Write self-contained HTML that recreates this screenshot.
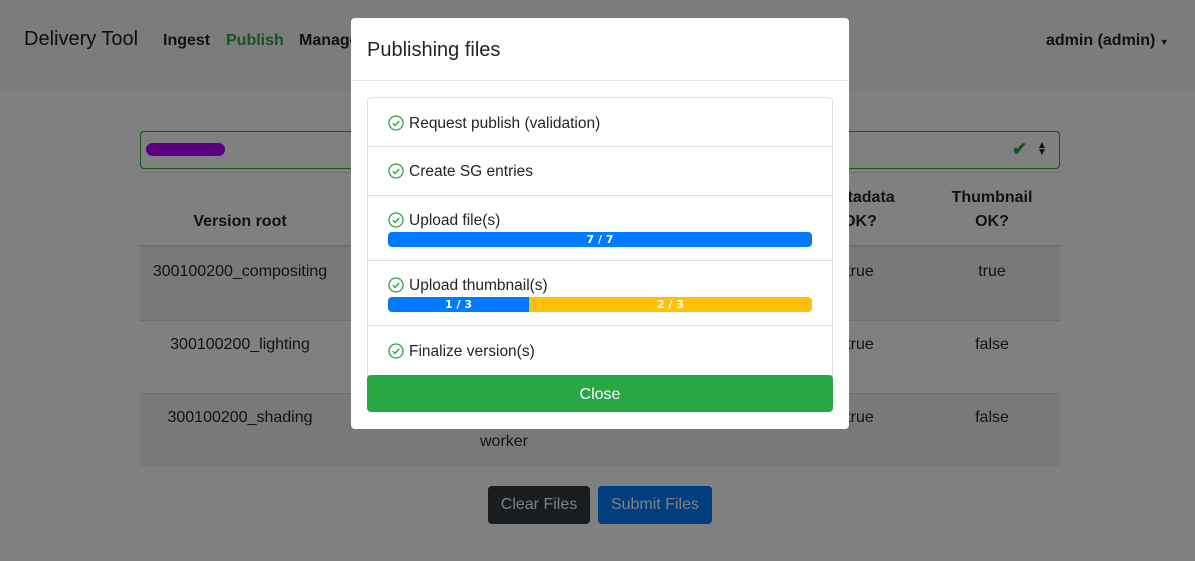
<!DOCTYPE html>
<html><head><meta charset="utf-8"><style>
*{box-sizing:border-box;margin:0;padding:0}
body{width:1195px;height:561px;overflow:hidden;background:#808080;font-family:"Liberation Sans",sans-serif;position:relative;color:#111215}
.a{position:absolute}
.nav{left:0;top:0;width:1195px;height:90px;background:#7c7c7d}
.c{text-align:center;font-size:16px}
.modal{left:351px;top:18px;width:498px;height:411px;background:#fff;border-radius:4px;font-family:"Liberation Sans",sans-serif}
.item{position:absolute;left:16px;width:466px;border:1px solid #dfdfdf;border-top:none;font-size:15.5px;color:#212529}
.chk{display:inline-block;vertical-align:-3px;margin-right:5px}
.bar{position:absolute;left:20px;width:424px;height:15px;border-radius:4px;overflow:hidden;display:flex;font-size:11px;font-weight:bold;color:#fff;line-height:15px;text-align:center;font-family:"DejaVu Sans",sans-serif}
</style></head><body>
<div class="a nav"></div>
<div class="a" style="left:24px;top:28px;font-size:20px;color:#0f0f0f">Delivery Tool</div>
<div class="a" style="left:163px;top:32px;font-size:16px;font-weight:bold;color:#111">Ingest</div>
<div class="a" style="left:226px;top:32px;font-size:16px;font-weight:bold;color:#145322">Publish</div>
<div class="a" style="left:299px;top:32px;font-size:16px;font-weight:bold;color:#111">Manage</div>
<div class="a" style="left:1046px;top:32px;font-size:16px;font-weight:bold;color:#111">admin (admin) <span style="font-size:9px">▼</span></div>

<div class="a" style="left:140px;top:131px;width:920px;height:38px;border:1px solid #145322;border-radius:4px"></div>
<div class="a" style="left:146px;top:143px;width:79px;height:13px;border-radius:7px;background:#5a007f"></div>
<div class="a" style="left:1012px;top:139px;color:#145322;font-size:18px;font-weight:bold">✔</div>
<div class="a" style="left:1037px;top:142px;font-size:10px;line-height:7px;color:#111">▲<br>▼</div>
<div class="a" style="left:140px;top:172px;width:920px;height:1px;background:#6f6f6f"></div>

<div class="a" style="left:140px;top:245px;width:920px;height:2px;background:#6c6e70"></div>
<div class="a" style="left:140px;top:247px;width:920px;height:73px;background:#797979"></div>
<div class="a" style="left:140px;top:320px;width:920px;height:1px;background:#6f6f6f"></div>
<div class="a" style="left:140px;top:393px;width:920px;height:73px;background:#797979;border-top:1px solid #6f6f6f"></div>
<div class="a c" style="left:140px;top:213px;width:200px;font-weight:bold">Version root</div>
<div class="a c" style="left:800px;top:186px;width:120px;font-weight:bold;line-height:24px">Metadata<br>OK?</div>
<div class="a c" style="left:932px;top:186px;width:120px;font-weight:bold;line-height:24px">Thumbnail<br>OK?</div>
<div class="a c" style="left:140px;top:263px;width:200px">300100200_compositing</div>
<div class="a c" style="left:140px;top:336px;width:200px">300100200_lighting</div>
<div class="a c" style="left:140px;top:409px;width:200px">300100200_shading</div>
<div class="a c" style="left:800px;top:263px;width:120px">true</div>
<div class="a c" style="left:800px;top:336px;width:120px">true</div>
<div class="a c" style="left:800px;top:409px;width:120px">true</div>
<div class="a c" style="left:932px;top:263px;width:120px">true</div>
<div class="a c" style="left:932px;top:336px;width:120px">false</div>
<div class="a c" style="left:932px;top:409px;width:120px">false</div>
<div class="a c" style="left:444px;top:433px;width:120px">worker</div>

<div class="a" style="left:488px;top:486px;width:102px;height:38px;background:#1a1d20;border-radius:4px;color:#808080;font-size:16px;text-align:center;line-height:38px">Clear Files</div>
<div class="a" style="left:598px;top:486px;width:114px;height:38px;background:#003e80;border-radius:4px;color:#808080;font-size:16px;text-align:center;line-height:38px">Submit Files</div>

<div class="a modal">
 <div style="position:absolute;left:16px;top:21px;font-size:20px;color:#212529">Publishing files</div>
 <div style="position:absolute;left:0;top:62px;width:498px;height:1px;background:#e5e5e5"></div>
 <div class="item" style="top:79px;height:50px;border-top:1px solid #dfdfdf;border-radius:4px 4px 0 0"><div style="position:absolute;left:20px;top:17px">§1Request publish (validation)</div></div>
 <div class="item" style="top:129px;height:49px"><div style="position:absolute;left:20px;top:16px">§1Create SG entries</div></div>
 <div class="item" style="top:178px;height:65px"><div style="position:absolute;left:20px;top:16px">§1Upload file(s)</div><div class="bar" style="top:36px"><div style="flex:1;background:#007bff">7 / 7</div></div></div>
 <div class="item" style="top:243px;height:65px"><div style="position:absolute;left:20px;top:16px">§1Upload thumbnail(s)</div><div class="bar" style="top:36px"><div style="width:141px;background:#007bff">1 / 3</div><div style="flex:1;background:#ffc107">2 / 3</div></div></div>
 <div class="item" style="top:308px;height:50px"><div style="position:absolute;left:20px;top:17px">§1Finalize version(s)</div></div>
 <div style="position:absolute;left:16px;top:357px;width:466px;height:37px;background:#28a745;border-radius:4px;color:#fff;font-size:16px;text-align:center;line-height:40px">Close</div>
</div>
<script>
var s='<svg class="chk" width="16" height="16" viewBox="0 0 16 16"><circle cx="8" cy="8" r="7" fill="none" stroke="#28a745" stroke-width="1.3"/><path d="M4.8 8.2l2.2 2.2 4.2-4.4" fill="none" stroke="#28a745" stroke-width="1.4"/></svg>';
document.querySelectorAll('.item>div:first-child').forEach(function(e){e.innerHTML=e.innerHTML.replace('§1',s)});
</script>
</body></html>
